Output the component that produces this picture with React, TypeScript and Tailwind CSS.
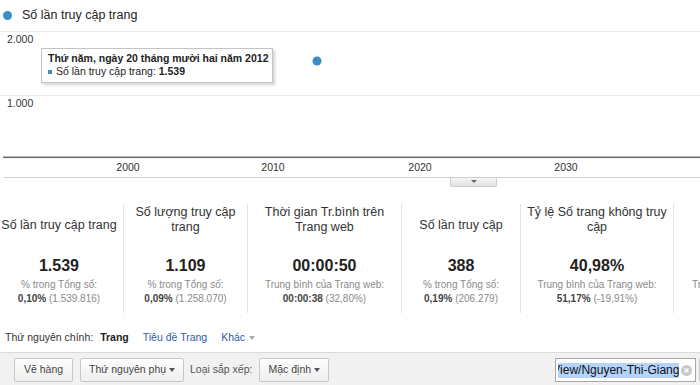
import React from "react";

const metrics = [
  {
    title: ["Số lần truy cập trang"],
    value: "1.539",
    label: "% trong Tổng số:",
    strong: "0,10%",
    rest: "(1.539.816)",
    width: "w-[128px] -ml-[5px]",
  },
  {
    title: ["Số lượng truy cập", "trang"],
    value: "1.109",
    label: "% trong Tổng số:",
    strong: "0,09%",
    rest: "(1.258.070)",
    width: "w-[124px] border-l",
  },
  {
    title: ["Thời gian Tr.bình trên", "Trang web"],
    value: "00:00:50",
    label: "Trung bình của Trang web:",
    strong: "00:00:38",
    rest: "(32,80%)",
    width: "w-[154px] border-l",
  },
  {
    title: ["Số lần truy cập"],
    value: "388",
    label: "% trong Tổng số:",
    strong: "0,19%",
    rest: "(206.279)",
    width: "w-[119px] border-l",
  },
  {
    title: ["Tỷ lệ Số trang không truy", "cập"],
    value: "40,98%",
    label: "Trung bình của Trang web:",
    strong: "51,17%",
    rest: "(-19,91%)",
    width: "w-[153px] border-l",
  },
  {
    title: [],
    value: "",
    label: "Trung bình của Trang web:",
    strong: "",
    rest: "",
    width: "w-[156px] border-l",
  },
];

function Chart() {
  const years = [
    { x: 128, t: "2000" },
    { x: 273, t: "2010" },
    { x: 420, t: "2020" },
    { x: 566, t: "2030" },
    { x: 712, t: "2040" },
  ];
  return (
    <div className="relative h-[147px]">
      <svg width="700" height="147" className="block">
        <line x1="0" y1="0.5" x2="700" y2="0.5" stroke="#ebebeb" />
        <line x1="0" y1="64.5" x2="700" y2="64.5" stroke="#ebebeb" />
        <rect x="3" y="125.5" width="697" height="1.6" fill="#6e6e6e" />
        <line x1="4" y1="146.5" x2="700" y2="146.5" stroke="#cfcfcf" />
        <g fontFamily="Liberation Sans, Arial, sans-serif" fontSize="10.5" fill="#333">
          <text x="7" y="11.5">2.000</text>
          <text x="7" y="75.5">1.000</text>
          {years.map((y) => (
            <text key={y.t} x={y.x} y="139.5" textAnchor="middle">
              {y.t}
            </text>
          ))}
        </g>
        <circle cx="317" cy="30" r="4.5" fill="#3a8dc6" />
      </svg>

      <div className="absolute left-[41px] top-[17px] w-[232px] h-[35px] bg-white border border-[#c4c4c4] shadow-[2px_2px_3px_rgba(0,0,0,0.18)] pl-[6px] pt-[3px] text-[10.5px] leading-[13px] text-[#222]">
        <div className="font-bold">Thứ năm, ngày 20 tháng mười hai năm 2012</div>
        <div className="flex items-center">
          <span className="w-[4px] h-[4px] bg-[#3a8dc6] mr-[4px]" />
          <span>
            Số lần truy cập trang: <b>1.539</b>
          </span>
        </div>
      </div>
    </div>
  );
}

function Button({ text, w, caret }: { text: string; w: string; caret?: boolean }) {
  return (
    <div
      className={`${w} h-[24px] flex items-center ${
        caret ? "justify-between px-[8px]" : "justify-center"
      } border border-[#c8c8c8] rounded-[2px] bg-gradient-to-b from-[#fdfdfd] to-[#efefef] text-[10.5px] text-[#444]`}
    >
      <span>{text}</span>
      {caret && (
        <span className="w-0 h-0 border-l-[3.5px] border-r-[3.5px] border-t-[4px] border-l-transparent border-r-transparent border-t-[#555]" />
      )}
    </div>
  );
}

export default function App() {
  return (
    <div className="w-[700px] h-[385px] overflow-hidden bg-white relative font-['Liberation_Sans',Arial,sans-serif] text-[#333]">
      <div className="h-[31px] flex items-center pl-[3px]">
        <span className="w-[9px] h-[9px] rounded-full bg-[#3a8dc6]" />
        <span className="ml-[10px] text-[12.5px] text-[#222]">Số lần truy cập trang</span>
      </div>

      <Chart />

      <div className="h-[9px] flex">
        <div className="ml-[450px] w-[47px] h-[9px] border border-t-0 border-[#cdcdcd] rounded-b-[2px] bg-gradient-to-b from-[#f6f6f6] to-[#e2e2e2] flex justify-center pt-[2px]">
          <span className="w-0 h-0 border-l-[3.5px] border-r-[3.5px] border-t-[3.5px] border-l-transparent border-r-transparent border-t-[#666]" />
        </div>
      </div>

      <div className="flex pt-[17px]">
        {metrics.map((m, i) => (
          <div
            key={i}
            className={`${m.width} shrink-0 h-[109px] border-[#e3e3e3] flex flex-col items-center text-center`}
          >
            <div
              className={`h-[31px] flex flex-col justify-end text-[12.5px] leading-[15px] text-[#333] ${
                m.title.length === 1 ? "pb-[2px]" : ""
              }`}
            >
              {m.title.map((t) => (
                <div key={t} className="whitespace-nowrap">
                  {t}
                </div>
              ))}
            </div>
            <div className="mt-[21px] h-[20px] text-[16px] leading-[20px] font-bold text-[#222] whitespace-nowrap">
              {m.value}
            </div>
            <div className="mt-[1px] text-[10px] leading-[15px] text-[#8a8a8a] whitespace-nowrap">{m.label}</div>
            <div className="-mt-[1px] h-[15px] text-[10px] leading-[15px] text-[#8a8a8a] whitespace-nowrap">
              <b className="text-[#444]">{m.strong}</b> {m.rest}
            </div>
          </div>
        ))}
      </div>

      <div className="h-[39px] flex items-end pb-[8px] pl-[5px] text-[10.5px] leading-[13px]">
        <span className="text-[#333]">Thứ nguyên chính:</span>
        <span className="ml-[7px] font-bold text-[#222]">Trang</span>
        <span className="ml-[14px] text-[#2a5db0]">Tiêu đề Trang</span>
        <span className="ml-[14px] text-[#2a5db0]">Khác</span>
        <span className="ml-[4px] mb-[4px] w-0 h-0 border-l-[3.5px] border-r-[3.5px] border-t-[4px] border-l-transparent border-r-transparent border-t-[#aaa]" />
      </div>

      <div className="relative h-[34px] bg-[#f1f1f1] border-t border-[#dadada] flex items-start pt-[5px] overflow-hidden">
        <span className="absolute left-[108px] -top-[5px] w-[9px] h-[9px] rotate-45 bg-[#f1f1f1] border-t border-l border-[#dadada]" />
        <div className="ml-[14px]">
          <Button text="Vẽ hàng" w="w-[59px]" />
        </div>
        <div className="ml-[7px]">
          <Button text="Thứ nguyên phụ" w="w-[104px]" caret />
        </div>
        <span className="ml-[6px] h-[24px] flex items-center text-[10.5px] text-[#555] whitespace-nowrap">
          Loại sắp xếp:
        </span>
        <div className="ml-[7px]">
          <Button text="Mặc định" w="w-[70px]" caret />
        </div>
        <div className="ml-[226px] shrink-0 w-[141px] h-[24px] bg-white border border-[#a8a8a8] flex items-center">
          <div className="ml-[2px] flex-1 overflow-hidden flex justify-end">
            <span className="whitespace-nowrap text-[12px] leading-[15px] text-[#111] bg-[#b4d4fb]">
              View/Nguyen-Thi-Giang
            </span>
          </div>
          <span className="ml-[2px] mr-[3px] w-[11px] h-[11px] rounded-full bg-[#c9c9c9] flex items-center justify-center shrink-0">
            <svg width="5" height="5" viewBox="0 0 5 5">
              <path d="M0.5 0.5 L4.5 4.5 M4.5 0.5 L0.5 4.5" stroke="#fff" strokeWidth="1.3" />
            </svg>
          </span>
        </div>
        <div className="ml-[3px] shrink-0 w-[30px] h-[24px] border border-[#c8c8c8] rounded-[2px] bg-gradient-to-b from-[#fdfdfd] to-[#efefef]" />
      </div>
    </div>
  );
}
